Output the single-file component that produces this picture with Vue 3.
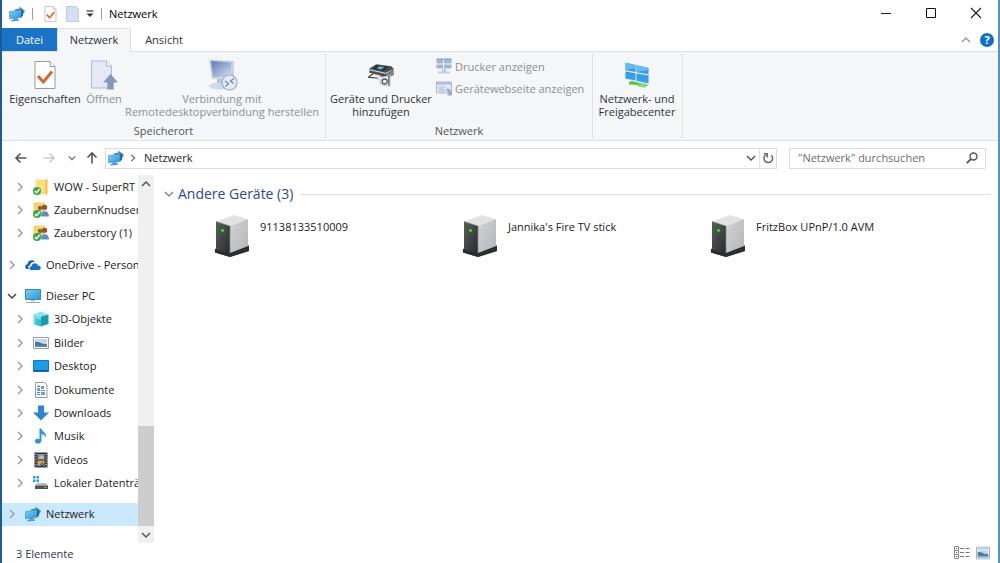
<script setup>
import { ref } from 'vue'

const groups = [
  {
    name: 'sync',
    rows: [
      { label: 'WOW - SuperRT', icon: 'folder' },
      { label: 'ZaubernKnudsen', icon: 'shared' },
      { label: 'Zauberstory (1)', icon: 'shared' },
    ],
  },
  { name: 'onedrive', rows: [{ label: 'OneDrive - Personal', icon: 'cloud', root: true }] },
  {
    name: 'pc',
    rows: [
      { label: 'Dieser PC', icon: 'pc', root: true, open: true },
      { label: '3D-Objekte', icon: 'cube' },
      { label: 'Bilder', icon: 'pictures' },
      { label: 'Desktop', icon: 'desktop' },
      { label: 'Dokumente', icon: 'documents' },
      { label: 'Downloads', icon: 'downloads' },
      { label: 'Musik', icon: 'music' },
      { label: 'Videos', icon: 'videos' },
      { label: 'Lokaler Datenträger (C:)', icon: 'drive' },
    ],
  },
  { name: 'network', rows: [{ label: 'Netzwerk', icon: 'network', root: true, selected: true }] },
]
const devices = ['91138133510009', "Jannika's Fire TV stick", 'FritzBox UPnP/1.0 AVM']
const query = ref('')
</script>

<template>
  <svg class="defs" aria-hidden="true">
    <defs>
      <linearGradient id="gScreen" x1="0" y1="0" x2="1" y2="1">
        <stop offset="0" stop-color="#7cd0f5" /><stop offset="1" stop-color="#2a93dc" />
      </linearGradient>
      <linearGradient id="gServer" x1="0" y1="0" x2="1" y2="1">
        <stop offset="0" stop-color="#d2d3d5" /><stop offset="1" stop-color="#b4b5b8" />
      </linearGradient>
      <linearGradient id="gFront" x1="0" y1="0" x2="1" y2="1">
        <stop offset="0" stop-color="#5c5d5f" /><stop offset="1" stop-color="#2a2b2c" />
      </linearGradient>
      <linearGradient id="gRemote" x1="0" y1="0" x2="1" y2="1">
        <stop offset="0" stop-color="#5f7bb0" /><stop offset="1" stop-color="#d4dff0" />
      </linearGradient>
    </defs>
    <symbol id="network" viewBox="0 0 16 16">
      <path d="M5.500 3.500L10.500 2.500V.5l5.500 4.500-3.500 6z" fill="#3f87b5" />
      <path d="M.5 5.500L12 4V11.500L.5 12.800z" fill="url(#gScreen)" stroke="#3b91c6" stroke-width=".6" />
      <path d="M4.500 12.500l4-.4.500 1.500-5 .5zM2.500 14l7.500-.6v1.400l-7.500.7z" fill="#4d9dcc" />
      <path d="M12 4l2-1v6.500L12 11.500z" fill="#256d9d" />
    </symbol>
    <symbol id="chevR" viewBox="0 0 8 10"><path d="M2 1l4 4-4 4" fill="none" stroke="currentColor" stroke-width="1.5" /></symbol>
    <symbol id="chevD" viewBox="0 0 10 8"><path d="M1 2l4 4 4-4" fill="none" stroke="currentColor" stroke-width="1.5" /></symbol>
    <symbol id="chevU" viewBox="0 0 10 8"><path d="M1 6l4-4 4 4" fill="none" stroke="currentColor" stroke-width="1.5" /></symbol>
    <symbol id="arrow" viewBox="0 0 14 12"><path d="M12.500 6H2M6.500 1.500L2 6l4.500 4.500" fill="none" stroke="currentColor" stroke-width="1.600" /></symbol>
    <symbol id="check" viewBox="0 0 22 29">
      <path d="M1 1h15l5 5v22H1z" fill="#fff" stroke="#9b9a9a" stroke-width="1" />
      <path d="M16 1v5h5" fill="#f4f4f4" stroke="#9b9a9a" stroke-width="1" />
      <path d="M4 15.500l5.300 6L18 11" fill="none" stroke="#e0602a" stroke-width="2.800" />
    </symbol>
    <symbol id="blank" viewBox="0 0 12 15"><path d="M.5.500h8.500l2.500 2.500v11.500H.5z" fill="#d5e1f3" stroke="#bccce4" /></symbol>
    <symbol id="open" viewBox="0 0 28 30">
      <path d="M1.500 1h15l5 5v22h-20z" fill="#e3eaf6" stroke="#aabbd9" />
      <path d="M16.500 1v5h5" fill="#f6f9fd" stroke="#aabbd9" />
      <path d="M20.500 14L28 22.500h-4.300V29.500h-6.400v-7H13z" fill="#8799b8" />
    </symbol>
    <symbol id="remote" viewBox="0 0 32 32">
      <path d="M3 .500l25 1.500v17L6 20z" fill="#c7d3e7" />
      <path d="M5 2l20.500 1.500-1 14L7 18z" fill="url(#gRemote)" />
      <path d="M11 20h7v5h-7z" fill="#b3c2da" /><ellipse cx="13" cy="27" rx="10" ry="3.500" fill="#cfdaea" />
      <circle cx="23.500" cy="23.500" r="7.500" fill="#e4ebf5" stroke="#9aacc9" stroke-width="1.200" />
      <path d="M19 22l3.500 2.500-3 3M28 19.500l-3.500 2.500 3 2.500" fill="none" stroke="#7388ae" stroke-width="1.300" />
    </symbol>
    <symbol id="printer" viewBox="0 0 28 25">
      <path d="M1.500 5.500L9 1l16 2 2.500 2.500v7L21 15 1.500 10z" fill="#4c5154" />
      <path d="M9 1.800l13.500 1.700L17 8.500 4 6z" fill="#26343f" /><path d="M12 3l5.500.8-3 2.700-5-.8z" fill="#62b4c9" />
      <path d="M1.500 6l17.500 4 8-3.500v1L19 11.500 1.500 7.500z" fill="#c9cbcc" />
      <path d="M19 12l8-3.500v4.500l-6 3z" fill="#83878a" />
      <path d="M0 14.500L5 10.500l12 2.500v4L0 15.500z" fill="#35393b" /><path d="M2 14.300l4-2.800 8 1.500-3 2.500z" fill="#fff" />
      <path d="M10 13.500l9 1v9.500l-6-2V18l-3-1z" fill="#e9eaea" stroke="#999" stroke-width=".5" />
      <path d="M15 15l9-2v11.500l-9-1z" fill="#f6f6f6" stroke="#aaa" stroke-width=".5" />
      <circle cx="18" cy="19.500" r="2.700" fill="none" stroke="#555" stroke-width="1.400" /><path d="M22.500 13.500v10.500" stroke="#5c6062" stroke-width="1.500" />
    </symbol>
    <symbol id="show" viewBox="0 0 16 16">
      <path d="M.5 1h6.500v4.500H.5zM8 1h7.500v4.500H8zM.5 6.500h6.500v4H.5zM8 6.500h7.500v4H8z" fill="#a3b5d5" />
      <path d="M6 11h4v3H6zM2 13.500h12V15.500H2z" fill="#c0cde2" /><path d="M.5 1h15" stroke="#8299c0" />
    </symbol>
    <symbol id="web" viewBox="0 0 16 16">
      <path d="M.5 2h15v11H.5z" fill="#e2eaf6" stroke="#a7b8d5" /><path d="M.5 2h15v2.500H.5z" fill="#aebfdc" />
      <path d="M2.500 7h7M2.500 9h6M2.500 11h7" stroke="#a9bad6" /><path d="M10 10l2-2 4 4v3.500h-5l2-2.500z" fill="#98abcc" />
    </symbol>
    <symbol id="center" viewBox="0 0 26 28">
      <path d="M5 21l7-3 10 4 2 3-8 1-3-2-8-.5z" fill="#5cc34b" /><path d="M15 22l7 2-1 3-6-2z" fill="#89dc70" />
      <path d="M1 1l24 5.500V24L1 18.500z" fill="#dceefa" />
      <path d="M1.500 1.800l10 2.300v6.900l-10-1.700zM12.500 4.300L24.500 7v6.300l-12-2.100zM1.500 10.400l10 1.800v7.400l-10-2.200zM12.500 12.400l12 2.100V22.500l-12-2.700z" fill="#369ee3" />
      <path d="M1.500 1.800l10 2.300v3l-10 2zM12.500 4.300L24.500 7v2l-12 2z" fill="#67b9ed" />
    </symbol>
    <symbol id="folder" viewBox="0 0 16 16">
      <path d="M2.500.500h12v15h-12z" fill="#fbdf82" /><path d="M12 .5h2.500v15l-2.500-1z" fill="#f3c75a" />
      <circle cx="4" cy="12" r="4" fill="#38a944" /><path d="M1.800 12l1.800 1.800 3-3.800" fill="none" stroke="#fff" stroke-width="1.400" />
    </symbol>
    <symbol id="shared" viewBox="0 0 16 16">
      <path d="M.500.500h11.500v13H.5z" fill="#f7d36c" />
      <circle cx="7" cy="6" r="2.200" fill="#8a643f" /><circle cx="11.500" cy="5.500" r="2.700" fill="#93552f" />
      <path d="M4.500 12c0-5 5-5 5 0z" fill="#8ec1df" /><path d="M8 14.500c0-7 8-7 8 0z" fill="#5f8fc0" /><path d="M10.500 7.500h2.500l-1 2.500z" fill="#efc49c" />
      <circle cx="4" cy="12" r="4" fill="#38a944" /><path d="M1.800 12l1.800 1.800 3-3.800" fill="none" stroke="#fff" stroke-width="1.400" />
    </symbol>
    <symbol id="cloud" viewBox="0 0 16 16">
      <path d="M1.500 12C-.8 10.500.3 7.500 2.500 7.300 2.500 3.500 8 1.800 9.800 5c-3-.5-4.600 1.500-4.700 3.200C2.800 8.500 3 11 4 12z" fill="#1b5db0" />
      <path d="M6 13c-2.300-.6-2-3.700.5-3.800C6.700 5.500 12 5 12.800 8.500c3.300-.2 4.200 4 .9 4.500z" fill="#1273ce" />
    </symbol>
    <symbol id="pc" viewBox="0 0 16 16">
      <path d="M.5 1.500h15v10H.5z" fill="url(#gScreen)" stroke="#3d86ba" /><path d="M6 12h4v1.500H6z" fill="#b8c8d2" /><path d="M1 14.500h14" stroke="#8fa9ba" />
    </symbol>
    <symbol id="cube" viewBox="0 0 16 16">
      <path d="M.500 3.500L8 .5l7.500 3L8 5.500z" fill="#8fe6ea" /><path d="M.5 3.500L8 5.500v10L.5 13z" fill="#6fdfe2" />
      <path d="M8 5.500l7.500-2V13L8 15.500z" fill="#1c9ab5" /><path d="M2.500 7.500L8 9v6.500L2.500 13.700z" fill="#35c3ce" />
    </symbol>
    <symbol id="pictures" viewBox="0 0 16 16">
      <path d="M.5 2.500h15v11H.5z" fill="#fff" stroke="#a0a0a0" /><path d="M2 4h12v8H2z" fill="#b8dcf4" />
      <path d="M2 7c4-1 7 3 12 2v3H2z" fill="#4d7790" /><path d="M2 10.500h12V12H2z" fill="#5a8dbb" />
    </symbol>
    <symbol id="desktop" viewBox="0 0 16 16">
      <path d="M.5 2.500h15v11H.5z" fill="#209be8" stroke="#1276c4" /><path d="M1 12.500h14" stroke="#0c5390" />
    </symbol>
    <symbol id="documents" viewBox="0 0 16 16">
      <path d="M2.500.500h9l2.500 2.500v12.500H2.500z" fill="#fff" stroke="#909ba2" />
      <path d="M4 6h3v3H4zM8 4h3v3H8zM8 10h4v3H8z" fill="#65a7cc" /><path d="M4 4.500h3M8 8.500h4M4 10.500h3M4 12.500h3M6 3v2" stroke="#4c91b9" />
    </symbol>
    <symbol id="downloads" viewBox="0 0 16 16"><path d="M5 .5h6v7h5L8 15.500 0 7.500h5z" fill="#2e86d3" /></symbol>
    <symbol id="music" viewBox="0 0 16 16">
      <path d="M6.500.5H8.500c.5 3.500 6 4.500 4 9.500 0-2.500-2.300-3.700-4-4v6.500c0 4-6.500 4-6.500.7 0-2.200 2.500-3 4.500-2z" fill="#2697df" />
    </symbol>
    <symbol id="videos" viewBox="0 0 16 16">
      <path d="M1.500.5h13v15h-13z" fill="#32363a" /><path d="M4.500 2h7v5.500h-7z" fill="#7c93c7" /><path d="M4.500 8.500h7V14h-7z" fill="#d0a952" />
      <path d="M5 7l3-4 3 2v2z" fill="#d8bd71" /><path d="M6 14l3-4 2.500 2v2z" fill="#556b99" />
      <path d="M3 2v13M13 2v13" stroke="#f3f3f3" stroke-dasharray="1 1.500" />
    </symbol>
    <symbol id="drive" viewBox="0 0 16 16">
      <path d="M0 1h2.500v2.500H0zM3.500 1H6v2.500H3.500zM0 4.500h2.500V7H0zM3.500 4.500H6V7H3.500z" fill="#1aa4e8" />
      <path d="M4 8h9l2 2.500H2z" fill="#b8bcc0" /><path d="M2 10.500h13v3.500H2z" fill="#4d5154" /><path d="M11.500 12.300h2" stroke="#7be36b" />
    </symbol>
    <symbol id="server" viewBox="0 0 34 42">
      <path d="M0 34l2-1 13 3L33 30l1 1v5L15 42 0 37.500z" fill="#424345" /><path d="M0 34l15 4 19-7v5L15 42 0 37.500z" fill="#2c2d2f" />
      <path d="M1 6.500L19 0l14 4-18 7z" fill="#e2e3e4" /><path d="M15 11l18-7v27L15 38z" fill="url(#gServer)" />
      <path d="M1 6.500L15 11v27L1 33.500z" fill="url(#gFront)" /><path d="M1 6.500L15 11v27" fill="none" stroke="#8a8b8d" stroke-width=".7" />
      <circle cx="7.500" cy="15.500" r="2.200" fill="#1e7b25" /><circle cx="7.500" cy="15.500" r="1.200" fill="#61ed55" />
    </symbol>
  </svg>

  <div class="window">
    <header class="titlebar">
      <svg class="i16"><use href="#network" /></svg>
      <span class="sep first"></span>
      <button class="quick" aria-label="Eigenschaften"><svg class="page"><use href="#check" /></svg></button>
      <button class="quick" aria-label="Neuer Ordner"><svg class="page"><use href="#blank" /></svg></button>
      <button class="quick more" aria-label="Schnellzugriff anpassen">
        <svg class="i8" viewBox="0 0 8 8"><path d="M.5 1h7" stroke="#333" stroke-width="1.200" /><path d="M.5 3.500h7L4 7z" fill="#333" /></svg>
      </button>
      <span class="sep"></span>
      <h1>Netzwerk</h1>
      <div class="controls">
        <button aria-label="Minimieren"><svg class="ctl" viewBox="0 0 12 12"><path d="M1 5.500h10" stroke="#222" /></svg></button>
        <button aria-label="Maximieren"><svg class="ctl" viewBox="0 0 12 12"><path d="M1.500 .5h9v9h-9z" fill="none" stroke="#111" /></svg></button>
        <button aria-label="Schließen"><svg class="ctl" viewBox="0 0 12 12"><path d="M1 0l10 10M11 0L1 10" stroke="#222" stroke-width="1.200" /></svg></button>
      </div>
    </header>

    <nav class="tabs">
      <button class="file">Datei</button>
      <button class="active">Netzwerk</button>
      <button class="plain">Ansicht</button>
      <div class="tabtools">
        <button aria-label="Menüband minimieren"><svg class="chev light"><use href="#chevU" /></svg></button>
        <button class="help" aria-label="Hilfe">?</button>
      </div>
    </nav>

    <section class="ribbon">
      <div class="group location">
        <div class="tools">
          <button class="big props"><svg class="sheet"><use href="#check" /></svg><span>Eigenschaften</span></button>
          <button class="big openbtn" disabled><svg class="i30"><use href="#open" /></svg><span>Öffnen</span></button>
          <button class="big rdp" disabled><svg class="i32"><use href="#remote" /></svg><span>Verbindung mit<br />Remotedesktopverbindung herstellen</span></button>
        </div>
        <footer>Speicherort</footer>
      </div>
      <div class="group net">
        <div class="tools">
          <button class="big add"><svg class="i28"><use href="#printer" /></svg><span>Geräte und Drucker<br />hinzufügen</span></button>
          <div class="stack">
            <button disabled><svg class="i16"><use href="#show" /></svg>Drucker anzeigen</button>
            <button disabled><svg class="i16"><use href="#web" /></svg>Gerätewebseite anzeigen</button>
          </div>
        </div>
        <footer>Netzwerk</footer>
      </div>
      <div class="group share">
        <div class="tools">
          <button class="big sharebtn"><svg class="i28"><use href="#center" /></svg><span>Netzwerk- und<br />Freigabecenter</span></button>
        </div>
      </div>
    </section>

    <div class="address">
      <button class="nav" aria-label="Zurück"><svg class="arr"><use href="#arrow" /></svg></button>
      <button class="nav fwd" aria-label="Vorwärts" disabled><svg class="arr"><use href="#arrow" /></svg></button>
      <button class="nav recent" aria-label="Zuletzt besucht"><svg class="small"><use href="#chevD" /></svg></button>
      <button class="nav up" aria-label="Nach oben"><svg class="arr"><use href="#arrow" /></svg></button>
      <div class="path">
        <svg class="i16"><use href="#network" /></svg>
        <svg class="small"><use href="#chevR" /></svg>
        <a href="#netzwerk">Netzwerk</a>
        <button class="drop" aria-label="Vorherige Orte"><svg class="chev"><use href="#chevD" /></svg></button>
        <button class="reload" aria-label="Aktualisieren">
          <svg class="ctl" viewBox="0 0 12 12"><path d="M9.300 3.200A4.300 4.300 0 1 1 3.500 3M2 1.800h3.300v3.600" fill="none" stroke="#666" stroke-width="1.500" /></svg>
        </button>
      </div>
      <label class="search">
        <input v-model="query" type="text" aria-label="Netzwerk durchsuchen" placeholder='"Netzwerk" durchsuchen' />
        <svg class="ctl" viewBox="0 0 12 12"><circle cx="7.500" cy="4.500" r="3.500" fill="none" stroke="#555" stroke-width="1.400" /><path d="M5 7L.8 11.200" stroke="#555" stroke-width="1.800" /></svg>
      </label>
    </div>

    <main>
      <aside>
        <div class="tree">
          <ul v-for="g in groups" :key="g.name" :class="['branch', g.name]">
            <li v-for="r in g.rows" :key="r.label" :class="{ root: r.root, selected: r.selected, open: r.open }">
              <svg class="twist"><use :href="r.open ? '#chevD' : '#chevR'" /></svg>
              <svg class="i16"><use :href="'#' + r.icon" /></svg>
              <span>{{ r.label }}</span>
            </li>
          </ul>
        </div>
        <div class="scrollbar">
          <button aria-label="Nach oben scrollen"><svg class="chev"><use href="#chevU" /></svg></button>
          <div class="track"><div class="thumb"></div></div>
          <button aria-label="Nach unten scrollen"><svg class="chev"><use href="#chevD" /></svg></button>
        </div>
      </aside>
      <section class="content">
        <h2><svg class="chev wide"><use href="#chevD" /></svg>Andere Geräte (3)</h2>
        <div class="devices">
          <div v-for="d in devices" :key="d" class="device">
            <svg class="server"><use href="#server" /></svg>
            <span>{{ d }}</span>
          </div>
        </div>
      </section>
    </main>

    <footer class="status">
      <span>3 Elemente</span>
      <div class="views">
        <button aria-label="Details">
          <svg class="i16" viewBox="0 0 16 16"><path d="M.5 1.500h4v4h-4zM.5 5.500h4v4h-4zM.5 9.500h4v4h-4z" fill="#fff" stroke="#8a8a8a" /><path d="M2 3.500h1M2 7.500h1M2 11.500h1" stroke="#555" /><path d="M6 3.500h4M11.500 3.500h4M6 7.500h4M11.500 7.500h4M6 11.500h4M11.500 11.500h4" stroke="#777" /></svg>
        </button>
        <button class="on" aria-label="Große Symbole"><svg class="view"><use href="#pictures" /></svg></button>
      </div>
    </footer>
  </div>
</template>

<style>
body { margin: 0; background: #fff; }
</style>

<style scoped>
* { box-sizing: border-box; }
.defs { position: absolute; width: 0; height: 0; }
.window {
  display: flex;
  flex-direction: column;
  min-height: 100vh;
  border-left: 2px solid #1d5c94;
  border-right: 2px solid #4a95d3;
  background: #fff;
  color: #1b1b1b;
  font: 11px/13px "Open Sans", "Noto Sans", sans-serif;
}
svg { display: block; flex: none; overflow: visible; }
button { display: flex; align-items: center; justify-content: center; padding: 0; border: 0; background: none; color: inherit; font: inherit; }
h1, h2, ul { margin: 0; padding: 0; font-weight: 400; list-style: none; }
.i8 { width: 8px; height: 8px; }
.i16 { width: 16px; height: 16px; }
.i28 { width: 26px; height: 28px; }
.i30 { width: 28px; height: 30px; }
.i32 { width: 32px; height: 32px; }
.ctl { width: 12px; height: 12px; }
.chev { width: 10px; height: 8px; color: #555; }
.small { width: 8px; height: 8px; color: #666; }
.page { width: 13px; height: 16px; }
.sheet { width: 22px; height: 29px; }

.titlebar { display: flex; align-items: center; height: 28px; padding-left: 7px; }
.sep { width: 1px; height: 12px; margin: 0 7px 0 4px; background: #a0a0a0; }
.sep.first { margin: 0 6px 0 7px; }
.quick { width: 22px; height: 22px; }
.quick.more { width: 14px; }
h1 { font-size: 11px; line-height: 16px; color: #000; }
.controls { display: flex; margin-left: auto; }
.controls button { width: 45px; height: 28px; }

.tabs { display: flex; height: 24px; border-bottom: 1px solid #dfe0e2; }
.tabs > button { height: 24px; padding-bottom: 2px; color: #333; }
.tabs .file { width: 55px; height: 23px; padding-bottom: 0; background: #1a73c6; color: #fff; }
.tabs .active { width: 74px; border: 1px solid #dfe0e2; border-bottom: 0; background: #f4f6f8; }
.tabs .plain { width: 66px; }
.tabtools { display: flex; align-items: center; gap: 9px; margin-left: auto; padding-right: 4px; }
.light { color: #999; }
.help { width: 14px; height: 14px; border-radius: 50%; background: #0f6fc0; color: #fff; font-weight: 700; }

.ribbon { display: flex; background: #f4f6f8; border-bottom: 1px solid #dfe0e2; padding: 2px 0; }
.group { display: flex; flex-direction: column; border-right: 1px solid #e0e2e6; color: #333; }
.group footer { height: 14px; text-align: center; color: #555; }
.tools { display: flex; align-items: flex-start; height: 70px; }
.location { width: 324px; }
.net { width: 267px; }
.share { width: 90px; }
.big { flex-direction: column; justify-content: flex-start; gap: 1px; padding-top: 5px; white-space: nowrap; }
.big > svg { height: 32px; }
.props { width: 86px; }
.openbtn { width: 32px; }
.rdp { width: 204px; }
.add { width: 110px; }
.sharebtn { width: 88px; }
button:disabled { color: #8c8f94; }
.stack { display: flex; flex-direction: column; gap: 6px; padding-top: 4px; }
.stack button { justify-content: flex-start; gap: 3px; white-space: nowrap; }

.address { display: flex; align-items: center; height: 34px; padding: 0 12px; }
.nav { width: 14px; height: 20px; color: #555; }
.arr { width: 14px; height: 12px; }
.nav.fwd { margin-left: 14px; color: #ccc; }
.fwd .arr { transform: rotate(180deg); }
.recent { margin-left: 9px; }
.up { margin-left: 6px; }
.up .arr { transform: rotate(90deg); }
.path { display: flex; flex: 1; align-items: center; height: 21px; margin-left: 6px; border: 1px solid #dcdcdc; padding-left: 2px; }
.path > .small { margin: 0 7px 0 5px; }
.path a { color: #1b1b1b; text-decoration: none; }
.path a, .search input { padding: 0 0 2px; }
.drop { width: 16px; margin-left: auto; }
.reload { width: 17px; height: 19px; border-left: 1px solid #e2e2e2; }
.search { display: flex; align-items: center; width: 197px; height: 21px; margin-left: 12px; padding: 0 7px 0 8px; border: 1px solid #dcdcdc; }
.search input { flex: 1; min-width: 0; border: 0; outline: 0; background: none; font: inherit; }
.search input::placeholder { color: #6d6d6d; opacity: 1; }

main { display: flex; flex: 1; min-height: 0; }
aside { display: flex; width: 152px; }
.tree { display: flex; flex: 1; flex-direction: column; gap: 8px; min-width: 0; padding-bottom: 17px; overflow: hidden; }
.branch { display: flex; flex-direction: column; flex: 1 1 auto; }
.sync { flex-grow: 3; }
.pc { flex-grow: 9; }
.branch li { display: flex; flex: 1 1 23px; align-items: center; max-height: 24px; padding-left: 13px; white-space: nowrap; color: #1b1b1b; }
.branch li.root { padding-left: 5px; }
.branch li.selected { background: #cce8ff; }
.twist { width: 10px; height: 10px; margin-right: 8px; color: #a0a0a0; }
.open .twist { color: #444; }
.branch span { margin-left: 5px; padding-bottom: 1px; }
.scrollbar { display: flex; flex-direction: column; width: 16px; background: #f0f0f0; }
.scrollbar button { height: 17px; }
.track { display: flex; flex: 1; flex-direction: column; justify-content: flex-end; }
.thumb { height: 30%; background: #cdcdcd; }

.content { flex: 1; padding: 9px 7px 0 10px; }
h2 { display: flex; align-items: center; gap: 4px; color: #33468f; font-size: 14px; line-height: 20px; }
h2::after { content: ""; flex: 1; height: 1px; margin-left: 3px; background: #e2e2e2; }
.wide { color: #8a8a8a; }
.devices { display: grid; grid-template-columns: repeat(auto-fill, 248px); padding: 11px 0 0 51px; }
.device { display: flex; gap: 11px; }
.server { width: 34px; height: 42px; }
.device span { padding-top: 5px; }

.status { display: flex; align-items: center; justify-content: space-between; height: 20px; padding: 0 8px 0 14px; color: #2b3a5c; }
.views { display: flex; align-items: center; gap: 6px; }
.view { width: 14px; height: 14px; }
.on { background: #cce8ff; }
</style>
